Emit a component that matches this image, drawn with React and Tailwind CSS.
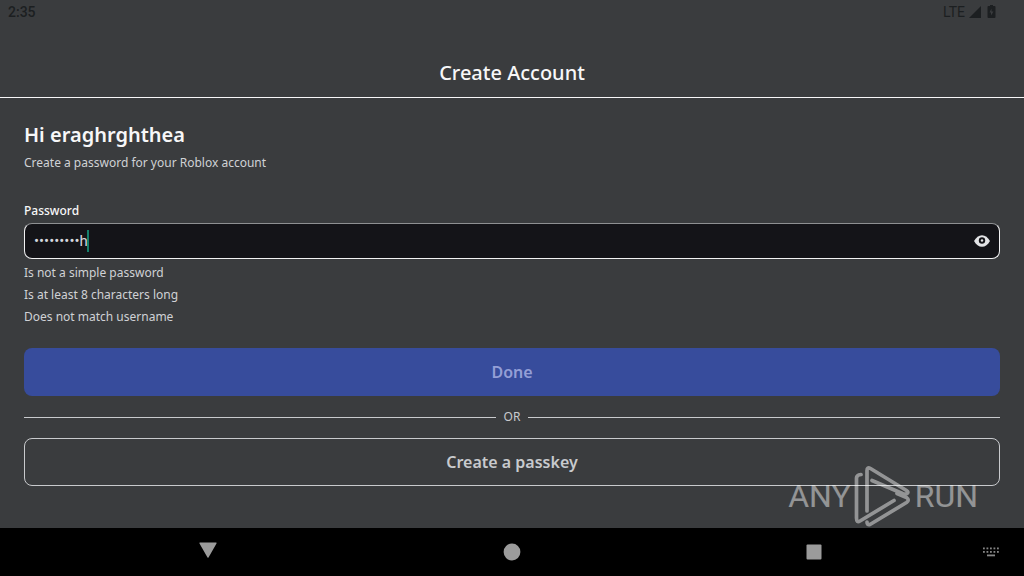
import React, { useState } from "react";

const hints = [
  "Is not a simple password",
  "Is at least 8 characters long",
  "Does not match username",
];

const StatusBar = () => (
  <div className="flex h-6 items-center justify-between pl-2 pr-7 font-[Roboto,sans-serif] text-sm font-medium text-[#1c1f21]">
    <span>2:35</span>
    <div className="flex items-center gap-1 font-normal">
      <span>LTE</span>
      <svg width="12" height="12" viewBox="0 0 12 12" fill="currentColor" aria-hidden="true">
        <path d="M12 0v12H0z" />
      </svg>
      <svg className="ml-0.5" width="9" height="14" viewBox="0 0 9 14" fill="currentColor" aria-hidden="true">
        <path
          fillRule="evenodd"
          d="M3 0h3v1h1.500a1 1 0 0 1 1 1v10a1 1 0 0 1-1 1h-6a1 1 0 0 1-1-1V2a1 1 0 0 1 1-1H3zM4.500 3.500L2.500 7.500h1.500V10.500l2.500-4H4.500z"
        />
      </svg>
    </div>
  </div>
);

const PasswordField = () => {
  const [value, setValue] = useState("•••••••••h");
  return (
    <div className="mt-7 flex flex-col">
      <label htmlFor="password" className="text-xs leading-5 font-medium text-[#f7f7f8]">
        Password
      </label>
      <div className="relative mt-0.5 flex h-9 items-center rounded-lg border border-[#f2f2f3] border-t-[#8e9092] bg-[#141418] px-2">
        <input
          id="password"
          type="text"
          value={value}
          onChange={(e) => setValue(e.target.value)}
          className="h-full min-w-0 flex-1 bg-transparent pl-px font-[Roboto,sans-serif] text-[15px] text-[#d5d7dd] outline-none"
        />
        <span className="absolute top-1.5 left-[62px] h-[22px] w-0.5 bg-[#14806c]" />
        <button type="button" aria-label="Show password" className="text-[#e3e4e6]">
          <svg width="18" height="18" viewBox="0 0 18 18" fill="none">
            <path d="M1 9C3 5.400 5.800 3.200 9 3.200S15 5.400 17 9c-2 3.600-4.800 5.800-8 5.800S3 12.600 1 9z" fill="currentColor" />
            <circle cx="9" cy="8.500" r="3.200" fill="#141418" />
            <circle cx="9" cy="8.500" r="1.200" fill="currentColor" />
          </svg>
        </button>
      </div>
      <ul className="mt-[3px] text-xs leading-[22px] text-[#d0d2d5]">
        {hints.map((hint) => (
          <li key={hint}>{hint}</li>
        ))}
      </ul>
    </div>
  );
};

const NavBar = () => (
  <nav className="relative flex h-12 items-center bg-black px-14 text-[#9b9b9b]">
    <div className="flex flex-1 items-center justify-around">
      <button type="button" aria-label="Back">
        <svg width="20" height="20" viewBox="0 0 20 20" fill="currentColor">
          <path d="M2 .5h16a.6.6 0 0 1 .5.9l-8 14a.6.6 0 0 1-1 0l-8-14a.6.6 0 0 1 .5-.9z" />
        </svg>
      </button>
      <button type="button" aria-label="Home">
        <svg width="20" height="20" viewBox="0 0 20 20" fill="currentColor">
          <circle cx="10" cy="10" r="8.400" />
        </svg>
      </button>
      <button type="button" aria-label="Recent apps">
        <svg width="20" height="20" viewBox="0 0 20 20" fill="currentColor">
          <rect x=".5" y="2.500" width="15" height="15" rx="1" />
        </svg>
      </button>
    </div>
    <button type="button" aria-label="Keyboard" className="absolute top-4 right-6 text-[#858585]">
      <svg width="18" height="16" viewBox="0 0 18 16" fill="currentColor">
        {[1, 4.500, 8, 11.500, 15].map((x) => (
          <React.Fragment key={x}>
            <rect x={x} y="3.500" width="1.800" height="1.800" />
            <rect x={x} y="7" width="1.800" height="1.800" />
          </React.Fragment>
        ))}
        <rect x="5" y="10.500" width="8" height="1.800" />
      </svg>
    </button>
  </nav>
);

const Watermark = () => (
  <div
    aria-hidden="true"
    className="pointer-events-none absolute right-[46px] bottom-12 flex h-16 items-center gap-0.5 font-[Roboto,sans-serif] text-[32px] text-white opacity-45"
  >
    <span>ANY</span>
    <svg width="60" height="64" viewBox="0 0 60 64" fill="none" stroke="currentColor" strokeWidth="3.700" strokeLinejoin="round" strokeLinecap="round">
      <path d="M8 10.500Q3.500 11 3.500 14V54Q3.500 59 7 57L41 36.500" />
      <path d="M14 47V6.500Q14 2.500 17.500 4.500L53.500 26.500Q56 28 54 29.500Q52 31 49.500 29.500L19 16.500" />
      <path d="M44 29.500L53.500 33.500Q57 36 53.500 38.500L17 60.500Q14 61.500 14 58" />
    </svg>
    <span>RUN</span>
  </div>
);

const App = () => (
  <div className="relative flex min-h-screen flex-col bg-[#3a3c3e] font-['Noto_Sans',sans-serif]">
    <StatusBar />
    <header className="mt-6 flex h-[50px] items-center justify-center border-b border-[#f7f7f8] text-xl font-medium text-[#f7f7f8]">
      Create Account
    </header>
    <main className="flex flex-1 flex-col px-6 pt-6 pb-10">
      <h1 className="text-xl leading-[26px] font-semibold text-[#f7f7f8]">Hi eraghrghthea</h1>
      <p className="mt-[5px] text-xs leading-5 text-[#d0d2d5]">Create a password for your Roblox account</p>
      <PasswordField />
      <button type="button" className="mt-5 h-12 rounded-lg bg-[#374c9c] text-base font-semibold text-[#949fd6]">
        Done
      </button>
      <div className="my-[11px] flex items-center gap-2 text-xs leading-5 text-[#c8cacd]">
        <span className="h-px flex-1 bg-current" />
        OR
        <span className="h-px flex-1 bg-current" />
      </div>
      <button type="button" className="h-12 rounded-lg border border-[#c8cacd] text-base font-semibold text-[#c8cacd]">
        Create a passkey
      </button>
    </main>
    <NavBar />
    <Watermark />
  </div>
);

export default App;
